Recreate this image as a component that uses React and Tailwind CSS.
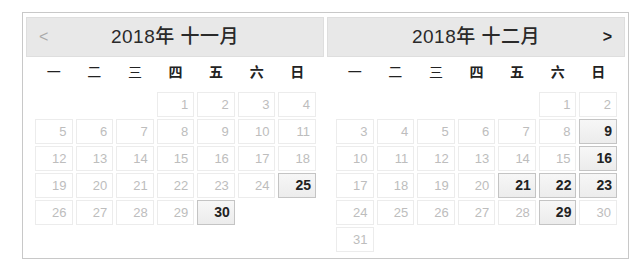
import React from 'react';

const WEEKDAYS = ['一', '二', '三', '四', '五', '六', '日'];

// offset = empty cells before day 1 (week starts Monday)
const MONTHS = [
    { title: '2018年 十一月', offset: 3, days: 30, marked: [25, 30], prev: true },
    { title: '2018年 十二月', offset: 5, days: 31, marked: [9, 16, 21, 22, 23, 29], next: true },
];

const DayCell = ({ day, marked }) => {
    if (!day) return <div className="h-[25px]" />;
    if (marked) {
        return (
            <div className="h-[25px] border border-[#c4c4c4] bg-gradient-to-b from-[#f7f7f7] to-[#ececec] flex items-center justify-end pr-[4px] text-[14px] font-bold text-[#222]">
                {day}
            </div>
        );
    }
    return (
        <div className="h-[25px] border border-[#ececec] bg-white flex items-center justify-end pr-[5px] text-[13px] text-[#bdbdbd]">
            {day}
        </div>
    );
};

const MonthPanel = ({ month }) => {
    const cells = [];
    for (let i = 0; i < month.offset; i++) cells.push(null);
    for (let d = 1; d <= month.days; d++) cells.push(d);

    return (
        <div className="w-[298px]">
            <div className="h-[40px] bg-[#e8e8e8] border border-[#dedede] flex items-center justify-between px-[12px]">
                <span className={`w-[14px] text-[16px] ${month.prev ? 'text-[#aaa]' : 'text-transparent'}`}>&lt;</span>
                <span className="text-[19px] font-medium text-[#2a2a2a] tracking-[0.5px]">{month.title}</span>
                <span className={`w-[14px] text-right text-[16px] font-bold ${month.next ? 'text-[#222]' : 'text-transparent'}`}>&gt;</span>
            </div>
            <div className="pl-[9px] w-[290px]">
                <div className="grid grid-cols-7 gap-x-[3px] h-[31px] items-center">
                    {WEEKDAYS.map((w, i) => (
                        <div key={w} className={`text-center text-[14px] text-[#222] ${i >= 3 ? 'font-bold' : 'font-normal'}`}>
                            {w}
                        </div>
                    ))}
                </div>
                <div className="grid grid-cols-7 gap-x-[3px] gap-y-[2px] mt-[4px]">
                    {cells.map((d, i) => (
                        <DayCell key={i} day={d} marked={d && month.marked.includes(d)} />
                    ))}
                </div>
            </div>
        </div>
    );
};

const App = () => {
    return (
        <div className="w-[642px] h-[276px] bg-white pt-[12px] pl-[22px]" style={{ fontFamily: '"Liberation Sans", "Noto Sans CJK SC", sans-serif' }}>
            <div className="w-[607px] h-[247px] border border-[#c8c8c8] pt-[4px] pl-[3px] flex gap-[3px]">
                {MONTHS.map(m => (
                    <MonthPanel key={m.title} month={m} />
                ))}
            </div>
        </div>
    );
};

export default App;
